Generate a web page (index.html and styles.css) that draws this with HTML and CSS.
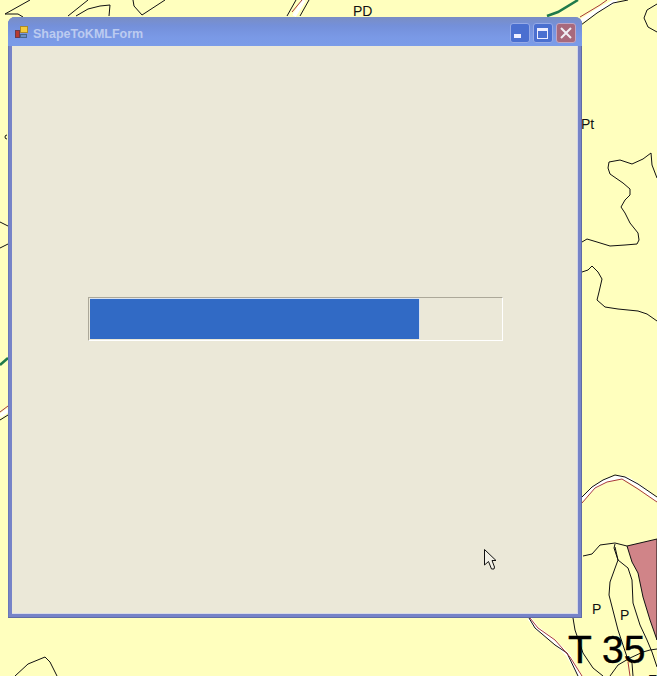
FILE: index.html
```html
<!DOCTYPE html>
<html>

<head lang="en">
    <meta charset="UTF-8">
    <title>ShapeToKMLForm</title>
    <link rel="stylesheet" href="styles.css">
</head>

<body>
    <!-- map behind the window -->
    <svg class="map" width="657" height="676" viewBox="0 0 657 676">
        <path class="fill-red" d="M627 546 L657 539 L657 640 L650 620 L643 597 L638 573 L632 562 Z" />
        <!-- white road bands, under the road edges -->
        <g class="band">
            <path d="M581 21 L600 9 L617 0" />
            <path d="M582 500 L593 488 L605 481 L618 477 L628 479 L640 487 L657 500" />
            <path d="M529 618 L537 628 L555 642 L568 655 L580 676" />
            <path d="M0 416 L8 410" />
            <path d="M294 16 L304 0" />
        </g>
        <g class="line">
            <path d="M30 0 L5 14 L18 14 L23 17" />
            <path d="M88 0 L68 16" />
            <path d="M76 16 L88 9 L100 6 L110 5 L109 16" />
            <path d="M133 0 L134 6 L142 15 L165 0" />
            <path d="M657 4 L647 10 L644 18 L648 27 L657 32" />
            <path d="M582 242 L587 239 L597 242 L610 246 L625 245 L637 244 L639 240 L638 233 L630 223 L625 213 L621 207 L625 200 L630 195 L630 189 L623 183 L610 174 L608 168 L609 162 L620 160 L632 164 L643 159 L651 153 L652 165 L657 178" />
            <path d="M582 272 L588 270 L592 266 L598 272 L602 279 L599 292 L597 300 L605 307 L618 309 L638 311 L647 314 L657 321" />
            <path d="M0 222 L8 226 M0 248 L8 244" />
            <path d="M7 135 A2 2 0 1 0 7 139" />
            <path d="M582 497 L592 487 L603 480 L615 475 L625 477 L638 484 L657 497" />
            <path d="M583 556 L592 554 L600 545 L615 543 L627 546" />
            <path d="M615 544 L614 548 L618 560 L610 582 L609 595 L618 630 L627 657 L632 663" />
            <path d="M615 547 L618 560 L628 568 L632 580 L633 603 L640 625 L647 640 L652 652 L657 667" />
            <path d="M573 618 L575 630 L583 653 L593 668 L603 676" />
            <path d="M610 676 L618 665 L630 658 L643 652 L650 650 L657 649" />
            <path d="M529 618 L535 628 L555 645 L567 653 L578 676" />
            <path d="M632 663 L633 676" />
            <path d="M15 676 L28 664 L45 657 L50 662 L57 676" />
            <path d="M581 25 L597 13 L613 3 L628 0" />
            <path d="M0 420 L8 415" />
            <path d="M287 16 L296 0 M300 16 L309 0" />
        </g>
        <g class="line-red">
            <path d="M580 17 L600 5 L607 0" />
            <path d="M582 503 L595 488 L607 482 L622 479 L638 489 L657 502" />
            <path d="M530 618 L538 628 L555 640 L570 657 L582 676" />
            <path d="M628 662 L630 676" />
            <path d="M0 412 L8 406" />
            <path d="M292 12 L302 0" />
        </g>
        <g class="line-green">
            <path d="M547 16 L558 12 L578 0" />
            <path d="M0 365 L8 358" />
        </g>
        <text class="map-label" x="353" y="16">PD</text>
        <text class="map-label" x="581" y="129">Pt</text>
        <text class="map-label" x="592" y="614">P</text>
        <text class="map-label" x="620" y="620">P</text>
        <text class="map-label" x="648" y="685">E</text>
        <text class="map-title" x="568" y="663">T 35</text>
    </svg>

    <div class="window">
        <div class="titlebar">
            <svg class="app-icon" width="16" height="16" viewBox="0 0 16 16">
                <rect x="1.5" y="5.5" width="4" height="7" fill="#b83a30" stroke="#6b3a4a" />
                <rect x="6.5" y="1.5" width="7" height="6" fill="#f5cc3c" stroke="#a98a2a" />
                <rect x="6.5" y="9.5" width="6" height="3" fill="#6d8fc0" stroke="#47658f" />
            </svg>
            <span class="title-text">ShapeToKMLForm</span>
            <div class="buttons">
                <div class="btn"><span class="min-glyph"></span></div>
                <div class="btn"><span class="max-glyph"></span></div>
                <div class="btn btn-close">
                    <svg width="14" height="14" viewBox="0 0 14 14">
                        <path d="M2 2 L12 12 M12 2 L2 12" />
                    </svg>
                </div>
            </div>
        </div>
        <div class="client">
            <div class="progress">
                <div class="progress-bar" style="width: 329px"></div>
            </div>
        </div>
    </div>

    <!-- mouse cursor -->
    <svg class="cursor" width="14" height="22" viewBox="0 0 14 22">
        <path d="M0.5 0.5 L0.5 16 L4.5 12.5 L7.5 20 L10 20 L10.5 18 L8 11.5 L12 11.5 Z" />
    </svg>
</body>

</html>
```

FILE: styles.css
```css
* {
    margin: 0;
    padding: 0;
    box-sizing: border-box;
}

body {
    position: relative;
    width: 657px;
    height: 676px;
    background-color: #ffffbe;
    overflow: hidden;
    font-family: "Liberation Sans", Arial, sans-serif;
}

.map {
    position: absolute;
    left: 0;
    top: 0;
}

.fill-red {
    fill: #d08488;
    stroke: #111;
}

.band,
.line,
.line-red,
.line-green {
    fill: none;
}

.band {
    stroke: #fff;
    stroke-width: 4;
}

.line {
    stroke: #111;
    stroke-width: 1;
}

.line-red {
    stroke: #a83a3a;
    stroke-width: 1;
}

.line-green {
    stroke: #1f7a4a;
    stroke-width: 2.5;
}

.map-label {
    font-size: 14px;
    fill: #111;
}

.map-title {
    font-size: 39px;
    fill: #000;
    stroke: #000;
    stroke-width: 0.4;
}

.window {
    position: absolute;
    left: 8px;
    top: 17px;
    width: 574px;
    height: 601px;
    display: flex;
    flex-direction: column;
    border-radius: 7px 7px 0 0;
    background: #7683c8;
    box-shadow: inset -1px -1px 0 #5f6ba6, inset 1px 0 0 #6a78b8;
}

.titlebar {
    height: 29px;
    display: flex;
    align-items: center;
    padding: 2px 6px 0 6px;
    border-radius: 7px 7px 0 0;
    background: linear-gradient(to bottom, #7a8ec4 0, #7490da 30%, #7a99e6 70%, #7b9ce8 100%);
}

.app-icon {
    flex: none;
    margin-right: 3px;
}

.title-text {
    color: #bccbf0;
    font-size: 12.5px;
    font-weight: bold;
    margin-top: 2px;
}

.buttons {
    margin-left: auto;
    display: flex;
    gap: 3px;
}

.btn {
    width: 20px;
    height: 20px;
    border-radius: 3px;
    border: 1px solid #96aae6;
    display: flex;
    background: #4a6fd0;
}

.btn-close {
    background: #a8697c;
    border-color: #c0a6c4;
    align-items: center;
    justify-content: center;
}

.btn-close svg path {
    stroke: #f0eef4;
    stroke-width: 2;
    fill: none;
}

.min-glyph {
    width: 7px;
    height: 4px;
    background: #eef;
    margin: 10px 0 0 3px;
}

.max-glyph {
    width: 11px;
    height: 11px;
    border: 1px solid #eef;
    border-top-width: 3px;
    margin: 4px 0 0 3px;
}

.client {
    margin: 0 4px 4px;
    flex: 1;
    background: #ebe8d8;
    border-right: 1px solid #d4d6e6;
    border-bottom: 1px solid #d8dae8;
    padding: 251px 0 0 76px;
}

.progress {
    width: 415px;
    height: 44px;
    padding: 1px;
    border: 1px solid;
    border-color: #aca899 #fff #fff #aca899;
}

.progress-bar {
    height: 100%;
    background: #316ac5;
    box-shadow: 1px 0 0 #d9e2ef, 0 -1px 0 #d9e2ef;
}

.cursor {
    position: absolute;
    left: 484px;
    top: 549px;
}

.cursor path {
    fill: #f2f0e6;
    stroke: #111;
    stroke-width: 1;
}
```
